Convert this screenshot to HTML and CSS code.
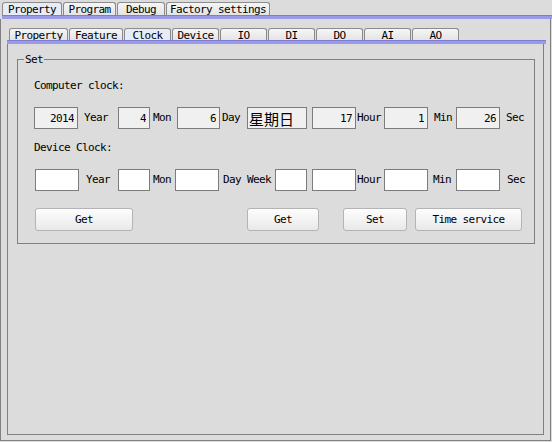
FILE: index.html
```html
<!DOCTYPE html>
<html>
<head>
<meta charset="utf-8">
<link rel="stylesheet" href="styles.css">
</head>
<body>
<div class="app">
  <div class="tabs outer-tabs">
    <div class="tab sel w60">Property</div>
    <div class="tab w53">Program</div>
    <div class="tab w48">Debug</div>
    <div class="tab w104">Factory settings</div>
  </div>
  <div class="bar outer-bar"></div>
  <div class="outer-panel">
    <div class="tabs inner-tabs">
      <div class="tab w59">Property</div>
      <div class="tab w54">Feature</div>
      <div class="tab sel w47">Clock</div>
      <div class="tab w47">Device</div>
      <div class="tab w47">IO</div>
      <div class="tab w47">DI</div>
      <div class="tab w47">DO</div>
      <div class="tab w47">AI</div>
      <div class="tab w47">AO</div>
    </div>
    <div class="bar inner-bar"></div>
    <div class="inner-panel">
      <fieldset class="group">
        <legend class="group-title">Set</legend>
        <div class="caption first">Computer clock:</div>
        <div class="row row1">
          <input class="fld ro w44" value="2014" readonly><span class="lab c40 p6">Year</span>
          <input class="fld ro w32" value="4" readonly><span class="lab c27 p3">Mon</span>
          <input class="fld ro w43" value="6" readonly><span class="lab c27 p2">Day</span>
          <input class="fld ro w60 cjk" value="星期日" readonly><span class="sp5"></span>
          <input class="fld ro w44" value="17" readonly><span class="lab c28 p1">Hour</span>
          <input class="fld ro w44" value="1" readonly><span class="lab c28 p6">Min</span>
          <input class="fld ro w44" value="26" readonly><span class="lab p6">Sec</span>
        </div>
        <div class="caption second">Device Clock:</div>
        <div class="row row2">
          <input class="fld w44"><span class="lab c39 p7">Year</span>
          <input class="fld w32"><span class="lab c25 p3">Mon</span>
          <input class="fld w44"><span class="lab c56 p4">Day Week</span>
          <input class="fld w32"><span class="sp5"></span>
          <input class="fld w44"><span class="lab c28 p1">Hour</span>
          <input class="fld w44"><span class="lab c28 p5">Min</span>
          <input class="fld w44"><span class="lab p7">Sec</span>
        </div>
        <div class="row buttons">
          <button class="btn b-get1">Get</button>
          <button class="btn b-get2">Get</button>
          <button class="btn b-set">Set</button>
          <button class="btn b-time">Time service</button>
        </div>
      </fieldset>
    </div>
  </div>
</div>
</body>
</html>
```
FILE: styles.css
```css
* { box-sizing: border-box; }
html, body { margin: 0; padding: 0; }
body {
  background: #dcdcdc;
  width: 552px;
  height: 442px;
  overflow: hidden;
  font-family: "DejaVu Sans Mono", "Liberation Mono", monospace;
  font-size: 11px;
  letter-spacing: -0.62px;
  color: #000;
}
.app { padding-top: 2px; }

.tabs { display: flex; gap: 1px; }
.outer-tabs { padding-left: 2px; height: 13px; }
.inner-tabs { padding-left: 2px; height: 12px; }
.tab {
  height: 100%;
  border: 1px solid #8c8c8c;
  border-bottom: none;
  border-radius: 3px 3px 0 0;
  background: linear-gradient(#f6f6f6, #e4e4e4);
  display: flex;
  align-items: center;
  justify-content: center;
  line-height: 11px;
  padding-top: 1px;
  white-space: nowrap;
  color: #000;
}
.tab.sel { background: #e6edf8; }
.w47 { width: 47px; }
.w48 { width: 48px; }
.w53 { width: 53px; }
.w54 { width: 54px; }
.w59 { width: 59px; }
.w60 { width: 60px; }
.w104 { width: 104px; }

.bar {
  height: 4px;
  background: #9a9ae6;
  border-top: 1px solid #7c7cd4;
}
.outer-bar { margin-left: 2px; }
.inner-bar { width: 539px; }

.outer-panel {
  width: 551px;
  height: 422px;
  border: 1px solid #808080;
  border-top: none;
  padding: 9px 0 5px 6px;
  display: flex;
  flex-direction: column;
}
.inner-panel {
  flex: 1;
  width: 537px;
  border: 1px solid #808080;
  border-top: none;
  padding: 9px 0 0 9px;
}

.group {
  margin: 0;
  width: 518px;
  border: 1px solid #808080;
  padding: 0 0 12px 16px;
  min-width: 0;
}
.group-title {
  margin-left: -10px;
  padding: 0 1px 0 1px;
  line-height: 13px;
  height: 13px;
}

.caption { line-height: 12px; height: 12px; }
.caption.first { margin-top: 14px; }
.caption.second { margin-top: 13px; }

.row { display: flex; align-items: center; }
.row1 { margin-top: 15px; height: 22px; }
.row2 { margin-top: 15px; height: 22px; }
.row2 > .fld:first-child { margin-left: 1px; }

.fld {
  height: 22px;
  margin: 0;
  border: 1px solid #7c7c7c;
  border-radius: 0;
  background: #fff;
  padding: 0 3px 0 2px;
  font: inherit;
  letter-spacing: -0.62px;
  text-align: right;
  color: #000;
  outline: none;
}
.fld.ro { background: #f0f0f0; }
.fld.cjk {
  text-align: left;
  font-family: "Noto Sans CJK SC", sans-serif;
  font-size: 15px;
  letter-spacing: 0;
  padding-left: 1px;
}
.w32 { width: 32px; }
.w43 { width: 43px; }
.w44 { width: 44px; }
.fld.w60 { width: 60px; }

.lab { white-space: nowrap; line-height: 12px; }
.c25 { width: 25px; }
.c27 { width: 27px; }
.c28 { width: 28px; }
.c39 { width: 39px; }
.c40 { width: 40px; }
.c56 { width: 56px; }
.p1 { padding-left: 1px; }
.p2 { padding-left: 2px; }
.p3 { padding-left: 3px; }
.p4 { padding-left: 4px; }
.p5 { padding-left: 5px; }
.p6 { padding-left: 6px; }
.p7 { padding-left: 7px; }
.sp5 { width: 5px; }

.buttons { margin-top: 17px; height: 23px; }
.btn {
  height: 23px;
  margin: 0;
  padding: 0;
  border: 1px solid #b4b4b4;
  border-radius: 3px;
  background: linear-gradient(#fdfdfd, #e9e9e9);
  font: inherit;
  letter-spacing: -0.62px;
  color: #000;
}
.b-get1 { width: 98px; margin-left: 1px; }
.b-get2 { width: 72px; margin-left: 114px; }
.b-set { width: 64px; margin-left: 24px; }
.b-time { width: 107px; margin-left: 8px; }
```
